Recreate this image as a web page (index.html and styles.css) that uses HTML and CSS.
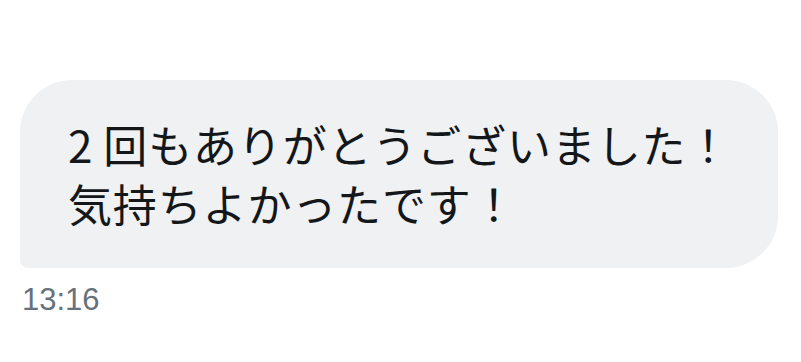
FILE: index.html
```html
<!DOCTYPE html>
<html lang="ja">
<head>
<meta charset="utf-8">
<link rel="stylesheet" href="styles.css">
</head>
<body>
<div class="thread">
  <div class="bubble">
    <p class="msg"><span class="num">2</span>回もありがとうございました！<br>気持ちよかったです！</p>
  </div>
  <div class="time">13:16</div>
</div>
</body>
</html>
```
FILE: styles.css
```css
html, body {
  margin: 0;
  padding: 0;
  background: #ffffff;
}
.thread {
  padding: 80px 0 0 20px;
  display: flex;
  flex-direction: column;
  align-items: flex-start;
}
.bubble {
  box-sizing: border-box;
  width: 758px;
  height: 188px;
  background: #eff1f3;
  border-radius: 52px 52px 52px 8px;
  padding: 35px 0 0 48px;
}
.msg {
  margin: 0;
  font-family: "Noto Sans CJK JP", "Noto Sans", sans-serif;
  font-size: 44px;
  line-height: 59px;
  letter-spacing: 0.85px;
  color: #14171a;
}
.num {
  margin-right: 10px;
}
.time {
  margin-top: 14px;
  margin-left: 2px;
  font-family: "Liberation Sans", Arial, sans-serif;
  font-size: 31px;
  line-height: 36px;
  color: #66717c;
}
```
